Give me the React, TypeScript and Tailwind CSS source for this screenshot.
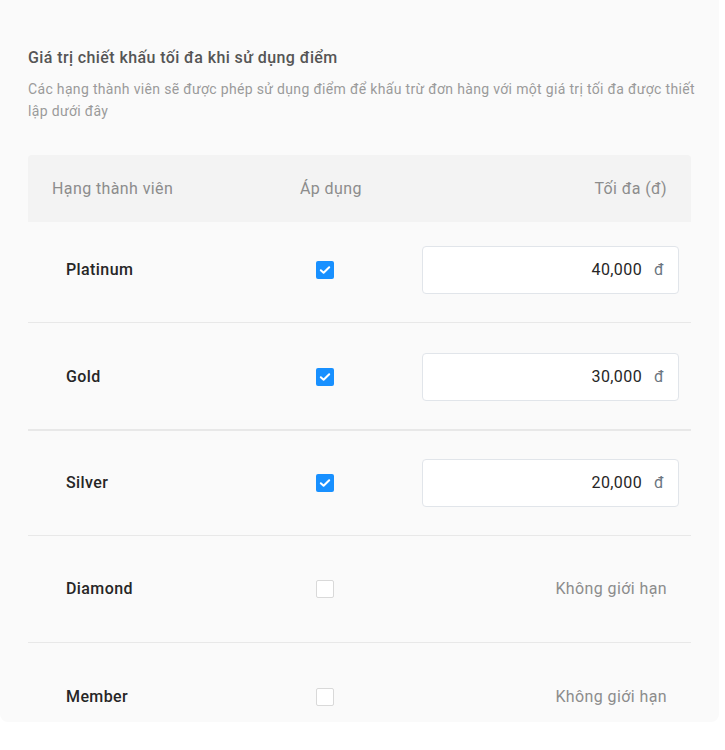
import React from "react";

type Row = { name: string; checked: boolean; value?: string; cls: string; divider?: string };

const rows: Row[] = [
  { name: "Platinum", checked: true, value: "40,000", cls: "pt-[24px] pb-[28px]", divider: "border-b border-[#e8e8e8]" },
  { name: "Gold", checked: true, value: "30,000", cls: "pt-[30px] pb-[28px]", divider: "border-b-2 border-[#e8e8e8]" },
  { name: "Silver", checked: true, value: "20,000", cls: "pt-[28px] pb-[28px]", divider: "border-b border-[#e8e8e8]" },
  { name: "Diamond", checked: false, cls: "pt-[29px] pb-[29px]", divider: "border-b border-[#e8e8e8]" },
  { name: "Member", checked: false, cls: "pt-[30px] pb-[1px]" },
];

function Check({ checked }: { checked: boolean }) {
  if (checked) {
    return (
      <div className="w-[18px] h-[18px] rounded-[2px] bg-[#1890ff] flex items-center justify-center">
        <svg width="12" height="10" viewBox="0 0 12 10" fill="none">
          <path d="M1.8 5.2 L4.6 7.8 L10.2 2.2" stroke="white" strokeWidth="2" strokeLinecap="round" strokeLinejoin="round" />
        </svg>
      </div>
    );
  }
  return <div className="w-[18px] h-[18px] rounded-[2px] bg-white border border-[#d9d9d9]" />;
}

export default function App() {
  return (
    <div className="w-[725px] h-[750px] bg-white tracking-[0.025em]" style={{ fontFamily: "Roboto, 'Noto Sans', sans-serif" }}>
      <div className="w-[719px] h-[722px] bg-[#fafafa] rounded-b-[8px] overflow-hidden px-[28px] pt-[46px]">
        <div className="text-[16px] leading-[24px] font-medium text-[#555]">
          Giá trị chiết khấu tối đa khi sử dụng điểm
        </div>
        <div className="mt-[8px] w-[672px] text-[14px] leading-[22px] text-[#9a9a9a] tracking-[0.33px]">
          Các hạng thành viên sẽ được phép sử dụng điểm để khấu trừ đơn hàng với một giá trị tối đa được thiết lập dưới đây
        </div>
        <div className="mt-[33px]">
          <div className="h-[67px] bg-[#f3f3f3] rounded-t-[4px] flex items-center text-[16px] text-[#8c8c8c]">
            <div className="pl-[24px] w-[272px]">Hạng thành viên</div>
            <div>Áp dụng</div>
            <div className="flex-1" />
            <div className="pr-[24px]">Tối đa (đ)</div>
          </div>
          {rows.map((r) => (
            <div key={r.name} className={`${r.cls} ${r.divider ?? ""}`}>
              <div className="h-[48px] flex items-center">
                <div className="pl-[38px] w-[288px] text-[16px] font-medium text-[#262626]">{r.name}</div>
                <Check checked={r.checked} />
                <div className="flex-1" />
                {r.value ? (
                  <div className="w-[257px] h-[48px] mr-[12px] bg-white border border-[#e1e5ea] rounded-[4px] flex items-center justify-end pr-[14px]">
                    <span className="text-[16px] text-[#262626]">{r.value}</span>
                    <span className="ml-[12px] text-[16px] text-[#6b7580]">đ</span>
                  </div>
                ) : (
                  <div className="pr-[24px] text-[16px] text-[#8c8c8c]">Không giới hạn</div>
                )}
              </div>
            </div>
          ))}
        </div>
      </div>
    </div>
  );
}
